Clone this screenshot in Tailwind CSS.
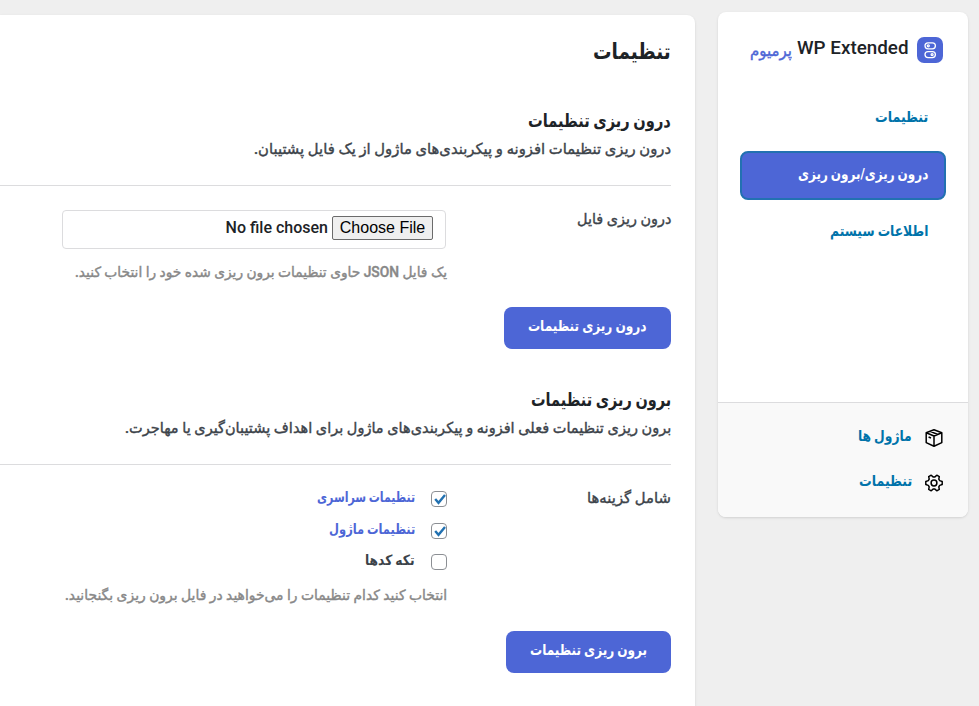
<!DOCTYPE html>
<html lang="fa" dir="rtl">
<head>
  <meta charset="UTF-8" />
  <meta name="viewport" content="width=device-width, initial-scale=1.0" />
  <title>WP Extended</title>
  <script src="https://cdn.jsdelivr.net/npm/@tailwindcss/browser@4"></script>
</head>
<body class="bg-[#efefef] font-['Roboto','DejaVu_Sans',sans-serif] font-medium h-screen overflow-hidden text-[#3c434a]">
  <div class="flex items-start h-full pr-[11px] gap-[23px]">

    <!-- Sidebar -->
    <aside class="w-[250px] h-[505px] mt-3 shrink-0 flex flex-col bg-white rounded-lg shadow-sm overflow-hidden">
      <div class="flex items-center h-[27px] mt-[25px] pr-[25px]">
        <svg class="w-[26px] h-[26px] mb-[2px] shrink-0" viewBox="0 0 26 26" fill="none">
          <rect width="26" height="26" rx="7" fill="#4d66d6" />
          <g stroke="#fff" stroke-width="1.3">
            <rect x="8" y="5.800" width="10.400" height="6" rx="3" />
            <rect x="8" y="14.600" width="10.400" height="6" rx="3" />
            <circle cx="11.300" cy="8.800" r="1" />
            <circle cx="15.100" cy="17.600" r="1" />
          </g>
        </svg>
        <span class="mr-2 pb-[5px] text-[19px] leading-6 text-[#1d2327] whitespace-nowrap" dir="ltr"><b class="t font-medium inline-block origin-right" data-w="112">WP Extended</b></span>
        <span class="mr-1.5 text-base text-[#4d66d6] whitespace-nowrap"><b class="t font-medium inline-block origin-right [-webkit-text-stroke:0.4px]" data-w="42">پرمیوم</b></span>
      </div>

      <nav class="flex flex-col gap-[9px] mt-[30px] px-[22px] text-[15px] text-[#0073aa]">
        <a class="h-[48px] flex items-center pr-[18px] pb-[2px]"><b class="t shrink-0 font-bold whitespace-nowrap origin-right" data-w="53">تنظیمات</b></a>
        <a class="h-[49px] flex items-center pr-[16px] pb-[2px] rounded-lg border-2 border-[#2271b1] bg-[#4d66d6] text-white"><b class="t shrink-0 font-bold whitespace-nowrap origin-right" data-w="130">درون ریزی/برون ریزی</b></a>
        <a class="h-[48px] flex items-center pr-[18px] pb-1"><b class="t shrink-0 font-bold whitespace-nowrap origin-right" data-w="98">اطلاعات سیستم</b></a>
      </nav>

      <div class="flex-1"></div>
      <div class="h-[115px] bg-[#f9f9f9] border-t border-[#dcdcde] pt-3 pr-[25px] text-[15px] text-[#0073aa]">
        <a class="h-[45px] flex items-center gap-[13px]">
          <svg class="w-[18px] h-[18px] mt-[1px] shrink-0" viewBox="0 0 18 18" fill="none" stroke="#000" stroke-width="1.500" stroke-linejoin="round">
            <path d="M9 .8 16.800 3.800v9.800L9 17.300 1.200 13.600V3.800zM1.200 3.800 9 7l7.800-3.200M9 7v10.300M5.200 2.400l7.600 3.100M3.600 8l2.400 1" />
          </svg>
          <b class="t shrink-0 font-bold pb-0.5 whitespace-nowrap origin-right" data-w="54">ماژول ها</b>
        </a>
        <a class="h-[45px] flex items-center gap-[13px]">
          <svg class="w-[18px] h-[18px] mt-[1px] shrink-0" viewBox="0 0 18 18" fill="none" stroke="#000" stroke-width="1.500" stroke-linejoin="round">
            <path d="M17.200 7.500v3l-2.500.9-.9 1.500.5 2.500-2.500 1.400-1.900-1.700H8.100l-1.900 1.700-2.500-1.400.5-2.500-.9-1.500-2.500-.9v-3l2.500-.9.900-1.500-.5-2.500 2.500-1.400 1.900 1.700h1.800l1.900-1.700 2.500 1.400-.5 2.500.9 1.500z" />
            <circle cx="9" cy="9" r="2.900" />
          </svg>
          <b class="t shrink-0 font-bold pb-0.5 whitespace-nowrap origin-right" data-w="53">تنظیمات</b>
        </a>
      </div>
    </aside>

    <!-- Settings panel -->
    <main class="flex-1 h-[691px] mt-[15px] pr-6 bg-white rounded-tr-lg shadow-sm">
      <h1 class="h-[72px] leading-[74px] text-[22px] font-bold text-[#1d2327]"><b class="t inline-block origin-right" data-w="78">تنظیمات</b></h1>

      <section>
        <h2 class="h-7 mt-5 leading-7 text-lg font-bold text-[#1d2327]"><b class="t inline-block origin-right whitespace-nowrap" data-w="143">درون ریزی تنظیمات</b></h2>
        <p class="h-[51px] border-b border-[#dcdcde] leading-7 text-[15px]"><b class="t font-medium inline-block origin-right whitespace-nowrap [-webkit-text-stroke:0.4px]" data-w="417">درون ریزی تنظیمات افزونه و پیکربندی‌های ماژول از یک فایل پشتیبان.</b></p>
        <div class="flex pt-6">
          <div class="w-[225px] h-5 leading-[18px] text-[15px]"><b class="t font-medium inline-block origin-right whitespace-nowrap [-webkit-text-stroke:0.4px]" data-w="94">درون ریزی فایل</b></div>
          <div class="w-[384px]">
            <div class="h-[39px] flex items-start pt-[5px] pr-3 gap-1 rounded border border-[#dcdcde]">
              <button class="w-[101px] h-6 rounded-xs border border-[#6b6b6b] bg-[#efefef] font-['Liberation_Sans',sans-serif] font-normal text-base leading-[22px] text-black">Choose File</button>
              <span class="leading-6 text-base text-[#1d2327]">No file chosen</span>
            </div>
            <p class="h-6 mt-[11px] -mr-px leading-6 text-sm text-[#888]"><b class="t font-medium inline-block origin-right whitespace-nowrap [-webkit-text-stroke:0.4px]" data-w="372">یک فایل JSON حاوی تنظیمات برون ریزی شده خود را انتخاب کنید.</b></p>
          </div>
        </div>
        <button class="w-[167px] h-[42px] mt-[23px] pr-6 pb-1 flex items-center rounded-lg bg-[#4d66d6] text-white text-[15px]"><b class="t shrink-0 font-bold whitespace-nowrap origin-right" data-w="119">درون ریزی تنظیمات</b></button>
      </section>

      <section>
        <h2 class="h-7 mt-[37px] leading-7 text-lg font-bold text-[#1d2327]"><b class="t inline-block origin-right whitespace-nowrap" data-w="140">برون ریزی تنظیمات</b></h2>
        <p class="h-[51px] border-b border-[#dcdcde] leading-7 text-[15px]"><b class="t font-medium inline-block origin-right whitespace-nowrap [-webkit-text-stroke:0.4px]" data-w="546">برون ریزی تنظیمات فعلی افزونه و پیکربندی‌های ماژول برای اهداف پشتیبان‌گیری یا مهاجرت.</b></p>
        <div class="flex pt-6">
          <div class="w-[224px] h-5 leading-[18px] text-[15px]"><b class="t font-medium inline-block origin-right whitespace-nowrap [-webkit-text-stroke:0.4px]" data-w="84">شامل گزینه‌ها</b></div>
          <div class="w-[385px] text-sm">
            <label class="h-8 flex items-start gap-4">
              <svg class="w-4 h-4 mt-0.5 shrink-0 rounded border border-[#8c8f94]" viewBox="1 1 14 14" fill="none"><path d="M4.200 8 7.500 11.800 14 4" stroke="#2271b1" stroke-width="2.400" /></svg>
              <b class="t font-bold text-[#4d66d6] whitespace-nowrap origin-right leading-4" data-w="98">تنظیمات سراسری</b>
            </label>
            <label class="h-[31px] flex items-start gap-4">
              <svg class="w-4 h-4 mt-0.5 shrink-0 rounded border border-[#8c8f94]" viewBox="1 1 14 14" fill="none"><path d="M4.200 8 7.500 11.800 14 4" stroke="#2271b1" stroke-width="2.400" /></svg>
              <b class="t font-bold text-[#4d66d6] whitespace-nowrap origin-right leading-4" data-w="86">تنظیمات ماژول</b>
            </label>
            <label class="h-[31px] flex items-start gap-4">
              <svg class="w-4 h-4 mt-0.5 shrink-0 rounded border border-[#8c8f94]" viewBox="1 1 14 14"></svg>
              <b class="t font-bold text-[#3c434a] whitespace-nowrap origin-right leading-4" data-w="50">تکه کدها</b>
            </label>
            <p class="h-6 leading-6 text-[#888]"><b class="t font-medium inline-block origin-right whitespace-nowrap [-webkit-text-stroke:0.4px]" data-w="382">انتخاب کنید کدام تنظیمات را می‌خواهید در فایل برون ریزی بگنجانید.</b></p>
          </div>
        </div>
        <button class="w-[165px] h-[42px] mt-6 pr-6 pb-1 flex items-center rounded-lg bg-[#4d66d6] text-white text-[15px]"><b class="t shrink-0 font-bold whitespace-nowrap origin-right" data-w="117">برون ریزی تنظیمات</b></button>
      </section>
    </main>
  </div>

  <script>
    // set each label to its own width without changing the line height;
    // the negative margin takes up the space left by the scaling
    function fit() {
      document.querySelectorAll(".t").forEach((el) => {
        const natural = el.offsetWidth;
        el.style.transform = `scaleX(${el.dataset.w / natural})`;
        el.style.marginLeft = `${el.dataset.w - natural}px`;
      });
    }
    window.addEventListener("load", () => document.fonts.ready.then(fit));
  </script>
</body>
</html>
